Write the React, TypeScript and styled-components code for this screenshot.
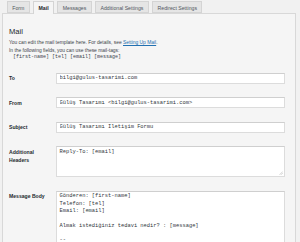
import React from "react";
import styled, { createGlobalStyle } from "styled-components";

const GlobalStyle = createGlobalStyle`
  html, body {
    margin: 0;
    padding: 0;
    background: #f1f1f1;
    overflow: hidden;
  }
  body {
    font-family: "Liberation Sans", Arial, sans-serif;
    color: #23282d;
  }
`;

const Page = styled.div`
  width: 300px;
  height: 242px;
  overflow: hidden;
  padding: 1px 4px 0 2px;
  box-sizing: border-box;
`;

const TabBar = styled.div`
  display: flex;
  align-items: flex-end;
  gap: 3.5px;
  padding-left: 5px;
  height: 12px;
  position: relative;
  z-index: 1;
`;

const Tab = styled.div<{ $active?: boolean }>`
  height: ${(p) => (p.$active ? "13px" : "12px")};
  margin-bottom: ${(p) => (p.$active ? "-1px" : "0")};
  line-height: 12px;
  padding: 0 4.3px;
  font-size: 5.2px;
  font-weight: ${(p) => (p.$active ? 700 : 400)};
  color: ${(p) => (p.$active ? "#1d2327" : "#50575e")};
  background: ${(p) => (p.$active ? "#f5f5f5" : "#e5e5e5")};
  border: 1px solid #d4d4d4;
  border-bottom: ${(p) => (p.$active ? "none" : "1px solid #d4d4d4")};
  box-sizing: border-box;
  white-space: nowrap;
`;

const Panel = styled.div`
  border: 1px solid #d8d8d8;
  background: #f5f5f5;
  padding: 13px 10px 0 6px;
  height: 260px;
  box-sizing: border-box;
`;

const Heading = styled.h2`
  margin: 0;
  font-size: 7.6px;
  line-height: 10px;
  font-weight: 400;
  color: #23282d;
`;

const Description = styled.p`
  margin: 2px 0 0;
  font-size: 4.9px;
  line-height: 7.5px;
  color: #3c434a;
`;

const Link = styled.a`
  color: #2271b1;
  text-decoration: underline;
`;

const Tags = styled.div`
  font-family: "Liberation Mono", "DejaVu Sans Mono", monospace;
  font-size: 5px;
  line-height: 7.5px;
  padding-left: 4px;
  color: #3c434a;
`;

const Table = styled.div`
  margin-top: 4.5px;
`;

const Row = styled.div`
  display: grid;
  grid-template-columns: 47px 1fr;
  padding: 6.75px 0;
`;

const Label = styled.label`
  font-size: 5.1px;
  line-height: 8px;
  font-weight: 700;
  padding-top: 1.5px;
  color: #23282d;
`;

const Field = styled.input`
  display: block;
  width: 100%;
  height: 11px;
  box-sizing: border-box;
  margin: 0;
  padding: 0 2.5px;
  border: 0.5px solid #dcdcdc;
  border-top-color: #cfcfcf;
  border-radius: 0;
  background: #fff;
  font-family: "Liberation Mono", "DejaVu Sans Mono", monospace;
  font-size: 5.4px;
  color: #32373c;
  outline: none;
`;

const Area = styled.div<{ $h: number }>`
  position: relative;
  height: ${(p) => p.$h}px;
  box-sizing: border-box;
  padding: 1.6px 2.5px;
  border: 0.5px solid #dcdcdc;
  border-top-color: #cfcfcf;
  background: #fff;
  font-family: "Liberation Mono", "DejaVu Sans Mono", monospace;
  font-size: 5.4px;
  line-height: 7.3px;
  color: #32373c;
  white-space: pre;
  overflow: hidden;
`;

const Grip = styled.svg`
  position: absolute;
  right: 1px;
  bottom: 1px;
  width: 4px;
  height: 4px;
`;

const tabs = ["Form", "Mail", "Messages", "Additional Settings", "Redirect Settings"];

const body = `Gönderen: [first-name]
Telefon: [tel]
Email: [email]

Almak istediğiniz tedavi nedir? : [message]

--`;

export default function App() {
  return (
    <>
      <GlobalStyle />
      <Page>
        <TabBar>
          {tabs.map((t) => (
            <Tab key={t} $active={t === "Mail"}>
              {t}
            </Tab>
          ))}
        </TabBar>
        <Panel>
          <Heading>Mail</Heading>
          <Description>
            You can edit the mail template here. For details, see <Link href="#">Setting Up Mail</Link>.
            <br />
            In the following fields, you can use these mail-tags:
          </Description>
          <Tags>[first-name] [tel] [email] [message]</Tags>
          <Table>
            <Row>
              <Label>To</Label>
              <Field readOnly defaultValue="bilgi@gulus-tasarimi.com" />
            </Row>
            <Row>
              <Label>From</Label>
              <Field readOnly defaultValue="Gülüş Tasarımı <bilgi@gulus-tasarimi.com>" />
            </Row>
            <Row>
              <Label>Subject</Label>
              <Field readOnly defaultValue="Gülüş Tasarımı İletişim Formu" />
            </Row>
            <Row>
              <Label>
                Additional
                <br />
                Headers
              </Label>
              <Area $h={31}>
                Reply-To: [email]
                <Grip viewBox="0 0 4 4">
                  <path d="M0.5 3.8 L3.8 0.5 M2 3.8 L3.8 2" stroke="#aaa" strokeWidth="0.5" />
                </Grip>
              </Area>
            </Row>
            <Row>
              <Label>Message Body</Label>
              <Area $h={90}>{body}</Area>
            </Row>
          </Table>
        </Panel>
      </Page>
    </>
  );
}
